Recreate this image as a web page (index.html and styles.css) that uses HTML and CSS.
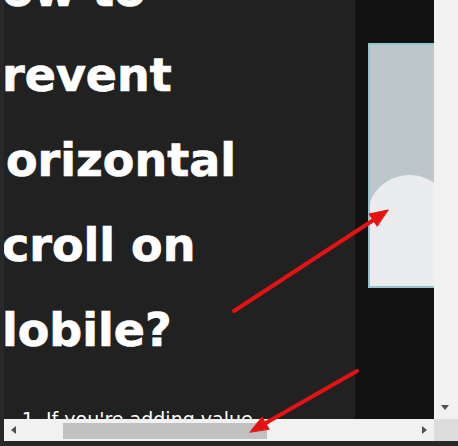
FILE: index.html
```html
<!DOCTYPE html>
<html lang="en">
<head>
<meta charset="utf-8">
<title>How to prevent horizontal scroll on mobile?</title>
<link rel="stylesheet" href="styles.css">
</head>
<body>
<div class="screen">
  <div class="top">
    <div class="viewport">
      <article class="panel">
        <h1 class="title">
          <span class="line">ow to</span>
          <span class="line">revent</span>
          <span class="line line-o">orizontal</span>
          <span class="line">croll on</span>
          <span class="line">lobile?</span>
        </h1>
        <ol class="steps">
          <li>If you're adding value</li>
        </ol>
      </article>
      <aside class="side">
        <div class="picture">
          <svg class="picture-art" viewBox="0 0 76 241" width="76" height="241">
            <path d="M0 157 A42 42 0 0 1 80 162 L80 241 L0 241 Z" fill="#ebeced"/>
          </svg>
        </div>
      </aside>
    </div>
    <div class="vscroll">
      <div class="vtrack"></div>
      <div class="vbtn"><span class="tri-down"></span></div>
    </div>
  </div>
  <div class="bottom">
    <div class="hscroll">
      <div class="hbtn"><span class="tri-left"></span></div>
      <div class="htrack"><div class="hthumb"></div></div>
      <div class="hbtn"><span class="tri-right"></span></div>
    </div>
    <div class="corner"></div>
  </div>
  <svg class="annot" viewBox="0 0 458 446" width="458" height="446">
    <g fill="#e51212" stroke="#e51212" stroke-linecap="round" stroke-linejoin="round">
      <line x1="234" y1="311" x2="375" y2="219" stroke-width="4"/>
      <polygon points="388,210 369,214 377,226" stroke-width="1"/>
      <line x1="357" y1="371" x2="264" y2="424" stroke-width="4"/>
      <polygon points="250,432 262,417 269,429" stroke-width="1"/>
    </g>
  </svg>
</div>
</body>
</html>
```
FILE: styles.css
```css
html, body {
  margin: 0;
  padding: 0;
}

body {
  background: #282828;
  width: 458px;
  height: 446px;
  overflow: hidden;
}

.screen {
  position: relative;
  width: 458px;
  height: 446px;
  padding: 0 0 5px 4px;
  box-sizing: border-box;
  display: flex;
  flex-direction: column;
}

.top {
  display: flex;
  height: 419px;
  flex: none;
}

.viewport {
  width: 430px;
  flex: none;
  display: flex;
  overflow: hidden;
}

.panel {
  width: 351px;
  flex: none;
  background: #212121;
  overflow: hidden;
}

.title {
  margin: -52px 0 0 -2px;
  font-family: "DejaVu Sans", "Liberation Sans", sans-serif;
  font-weight: 700;
  font-size: 46px;
  line-height: 85px;
  color: #ffffff;
  -webkit-text-stroke: 0.7px #ffffff;
  white-space: nowrap;
}

.line {
  display: block;
}

.line-o {
  padding-left: 4px;
}

.steps {
  margin: 32px 0 0;
  padding-left: 42px;
  font-family: "DejaVu Sans", "Liberation Sans", sans-serif;
  font-weight: 400;
  font-size: 19px;
  line-height: 28px;
  color: #ffffff;
  white-space: nowrap;
}

.side {
  flex: 1;
  background: #121212;
  padding: 43px 0 0 13px;
  overflow: hidden;
}

.picture {
  width: 80px;
  height: 245px;
  box-sizing: border-box;
  border: 2px solid #93c4d0;
  background: #bcc6cb;
  overflow: hidden;
}

.picture-art {
  display: block;
}

.vscroll {
  width: 24px;
  flex: none;
  background: #f1f1f1;
  display: flex;
  flex-direction: column;
}

.vtrack {
  flex: 1;
}

.vbtn {
  height: 24px;
  display: flex;
  align-items: center;
  justify-content: center;
}

.tri-down {
  width: 0;
  height: 0;
  border-left: 4.5px solid transparent;
  border-right: 4.5px solid transparent;
  border-top: 5px solid #505050;
  margin-left: -2px;
}

.bottom {
  display: flex;
  height: 22px;
  flex: none;
}

.hscroll {
  width: 430px;
  flex: none;
  background: #f1f1f1;
  display: flex;
  align-items: center;
}

.hbtn {
  width: 22px;
  height: 22px;
  flex: none;
  display: flex;
  align-items: center;
  justify-content: center;
}

.tri-left {
  width: 0;
  height: 0;
  border-top: 4.5px solid transparent;
  border-bottom: 4.5px solid transparent;
  border-right: 5px solid #505050;
  margin-left: -4px;
}

.tri-right {
  width: 0;
  height: 0;
  border-top: 4.5px solid transparent;
  border-bottom: 4.5px solid transparent;
  border-left: 5px solid #505050;
  margin-left: 2px;
}

.htrack {
  flex: 1;
  height: 16px;
  margin-top: 2px;
}

.hthumb {
  margin-left: 37px;
  width: 204px;
  height: 100%;
  background: #c1c1c1;
}

.corner {
  width: 24px;
  flex: none;
  background: #dcdcdc;
}

.annot {
  position: absolute;
  left: 0;
  top: 0;
  pointer-events: none;
}
```
